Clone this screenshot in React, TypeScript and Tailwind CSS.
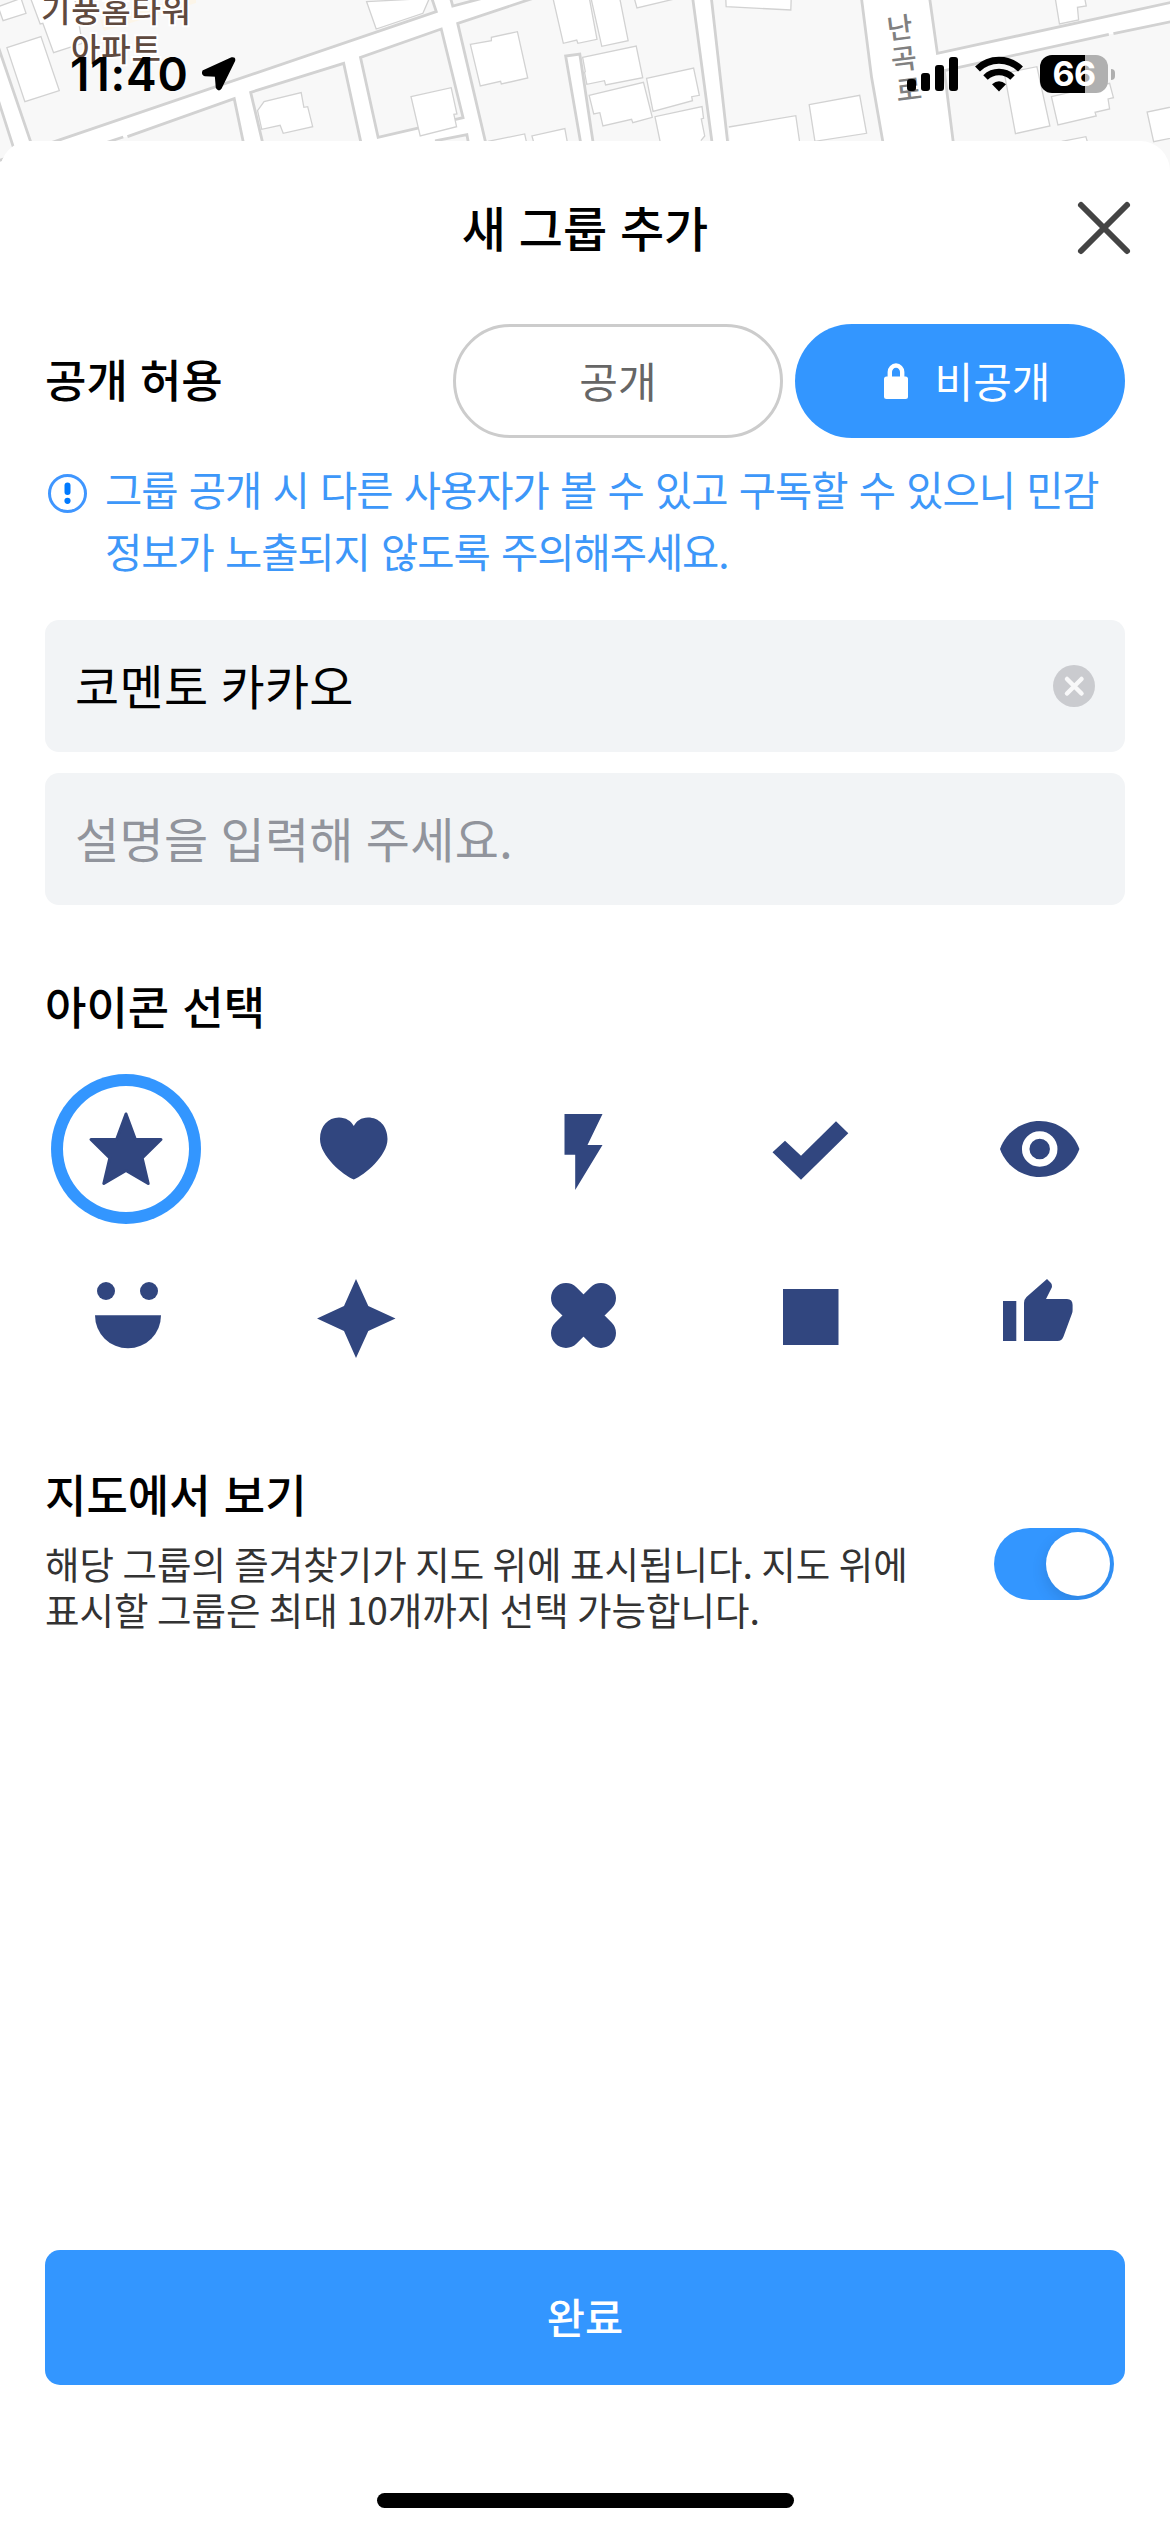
import React, { useState } from 'react';

interface GroupIconData {
  name: string;
  shape: React.ReactNode;
}

interface VisibilityButtonProps {
  text: string;
  active: boolean;
  onClick: () => void;
}

const GROUP_ICONS: GroupIconData[] = [
  {
    name: 'star',
    shape: (
      <path
        d="M75 40 L84.4 65.5 H110 L91.2 84 L97.2 109.5 L75 96.5 L52.8 109.5 L58.8 84 L40 65.5 H65.6 Z"
        stroke="currentColor"
        strokeWidth="3"
        strokeLinejoin="round"
      />
    ),
  },
  {
    name: 'heart',
    shape: <path d="M73.8 105.5 C63 101 40 82 40 65 C40 52 48 43.5 59 43.5 C66 43.5 71 47 73.8 52 C76.6 47 81 43.5 88 43.5 C99 43.5 107.5 52 107.5 65 C107.5 82 84.5 101 73.8 105.5 Z" />,
  },
  { name: 'bolt', shape: <path d="M56.5 40 H94.5 L79.5 71 H94.5 L67.2 116 V80.8 H56.5 Z" /> },
  { name: 'check', shape: <path d="M35.5 78.3 L48 66.7 L64 81.7 L99 47.3 L111.3 59.3 L64 105.7 Z" /> },
  {
    name: 'eye',
    shape: (
      <>
        <path d="M35 75 C41 58 57 47 74.7 47 C92.4 47 108.4 58 114.4 75 C108.4 92 92.4 103 74.7 103 C57 103 41 92 35 75 Z" />
        <circle cx="74.7" cy="75" r="14" fill="none" stroke="white" strokeWidth="7.5" />
      </>
    ),
  },
  {
    name: 'smile',
    shape: (
      <>
        <circle cx="55" cy="49" r="9" />
        <circle cx="98" cy="49" r="9" />
        <path d="M44 73.3 H110 A33 33 0 0 1 44 73.3 Z" />
      </>
    ),
  },
  { name: 'sparkle', shape: <path d="M76 37 L88.3 64 L115.5 76.5 L88.3 89 L76 116 L64 89 L37 76.5 L64 64 Z" /> },
  {
    name: 'clover',
    shape: <path d="M58 56 L93 91 M93 56 L58 91" fill="none" stroke="currentColor" strokeWidth="30" strokeLinecap="round" />,
  },
  { name: 'square', shape: <rect x="46" y="47" width="55.5" height="56" /> },
  {
    name: 'thumb',
    shape: (
      <path d="M38 59 H51.3 V99 H38 Z M59 99 V61 Q59 57.5 61.5 55 L82 37 L85.5 40.5 Q87.5 42.5 86.8 45.5 L81 57 H102 Q107.6 57 107.6 63 V68 Q107.6 70 107 71.5 L98.5 94.5 Q96.8 99 92.5 99 Z" />
    ),
  },
];

// Traced on a stretched grid, the groups below scale it back to screen pixels
const LEFT_BLOCKS =
  'M-20 88 V-20 H1124 L1140 35 L150 422 L-100 520 L117 560 L80 425 Z M-20 245 L68 560 H-20 Z M333 410 L612 296 L660 560 H100 V495 L322 411 M685 422 L655 277 L898 190 L942 422 L965 560 H705 Z M988 412 L942 172 L1153 87 L1210 353 Z M1140 422 L1220 404 L1245 560 H1140 Z M1174 -20 L1183 18 L1310 -20 Z M1296 560 L1196 70 L1440 -23 H1808 L1876 560 Z';
const LEFT_BUILDINGS =
  'M-5 20 L8 62 L68 40 L55 -5 Z M18 143 L107 110 L155 272 L65 305 Z M80 -5 L105 72 L112 70 L140 158 L215 130 L195 -5 Z M958 5 L983 87 L1105 40 L1122 -5 Z M1229 133 L1284 122 V112 L1352 95 L1379 234 L1310 252 L1308 244 L1255 258 Z M673 332 L690 305 L787 278 L794 322 L804 320 L817 380 L740 400 L732 376 L684 388 Z M1074 290 L1179 263 L1194 342 L1186 343 L1193 380 L1098 408 Z M1275 424 L1371 402 L1380 450 M1400 450 L1390 408 L1476 386 L1486 450 M1445 -5 L1472 130 L1507 120 L1510 130 L1560 118 L1540 -5 Z';
const RIGHT_BLOCKS =
  'M368 -20 L425 560 H838 L788 232 L760 -20 Z M938 -20 L960 160 L1600 0 V-20 Z M1408 103 L978 212 L1016 560 H1600 V58 L1420 101';
const RIGHT_BUILDINGS =
  'M55 -5 L83 139 L152 122 L130 -5 Z M168 -5 L175 24 L280 -5 Z M407 -5 L408 20 L577 30 L578 -5 Z M33 172 L173 138 L190 233 L93 255 L90 242 L44 253 L38 217 L40 215 Z M200 235 L323 204 L338 286 L318 290 L320 302 L217 334 Z M50 286 L192 247 L215 352 L164 368 L161 358 L86 378 L78 338 L62 342 Z M240 450 L222 350 L345 320 L349 355 L343 357 L352 408 L342 422 M415 381 L590 347 L603 450 H420 M625 314 L757 286 L775 400 L640 424 Z M1268 -5 L1279 72 L1329 60 L1326 22 L1349 18 L1345 -5 Z M1135 220 L1220 200 L1254 378 L1164 401 Z M1258 290 L1410 250 L1420 293 L1406 297 L1410 327 L1372 337 L1375 348 L1275 375 Z M1600 314 L1508 336 L1525 425 L1600 408 M1285 424 L1348 410 L1358 450';

const MapBackdrop: React.FC = () => (
  <svg viewBox="0 0 1170 180" className="absolute inset-0 h-[180px] w-[1170px] bg-white font-['Noto_Sans_CJK_KR',sans-serif]">
    <g transform="scale(0.3827 0.3333)" stroke="#d2d2d2">
      <path d={LEFT_BLOCKS} fill="#f8f8f8" strokeWidth="2.8" vectorEffect="non-scaling-stroke" />
      <path d={LEFT_BUILDINGS} fill="#ffffff" strokeWidth="1.3" vectorEffect="non-scaling-stroke" />
      <path d="M1522 460 L1478 168 L1515 162 L1554 460" fill="#ffffff" strokeWidth="2.8" vectorEffect="non-scaling-stroke" />
    </g>
    <g transform="translate(570 0) scale(0.3827 0.3333)" stroke="#d2d2d2">
      <path d={RIGHT_BLOCKS} fill="#f8f8f8" strokeWidth="2.8" vectorEffect="non-scaling-stroke" />
      <path d={RIGHT_BUILDINGS} fill="#ffffff" strokeWidth="1.3" vectorEffect="non-scaling-stroke" />
    </g>
    <path d="M100 20 L104 31 L196 3 V-5 Z" fill="#fcf5e8" />
    <g fill="#5f4a3f" stroke="#ffffff" strokeWidth="4" paintOrder="stroke" fontSize="32" fontWeight="500" textAnchor="middle">
      <text x="116" y="22" textLength="150">기풍홈타워</text>
      <text x="116" y="61" textLength="90">아파트</text>
    </g>
    <g fill="#808080" stroke="#ffffff" strokeWidth="3" paintOrder="stroke" fontSize="28" fontWeight="500" textAnchor="middle">
      <text transform="translate(901 38) rotate(-7)">난</text>
      <text transform="translate(905 69) rotate(-7)">곡</text>
      <text transform="translate(910 100) rotate(-7)">로</text>
    </g>
  </svg>
);

const StatusBar: React.FC = () => (
  <div className="relative flex h-[148px] items-center justify-between pr-[55px] pl-[70px] font-['Inter',sans-serif]">
    <div className="flex items-center gap-[11px]">
      <span className="text-[46px] leading-[50px] font-semibold tracking-[0.8px] text-black">11:40</span>
      <svg viewBox="0 0 36 36" className="size-[36px]">
        <path d="M32 2.5 L3.5 15.5 Q2.5 18.5 5 19 L16 19.5 L17 31.5 Q18.5 34.5 20.5 32 L34 4.5 Q34.5 2 32 2.5 Z" stroke="black" strokeWidth="2.5" strokeLinejoin="round" />
      </svg>
    </div>
    <div className="flex items-center">
      <svg viewBox="0 0 51 34" className="h-[34px] w-[51px]">
        <rect x="0" y="22" width="9" height="12" rx="3" />
        <rect x="14" y="16" width="9" height="18" rx="3" />
        <rect x="28" y="8" width="9" height="26" rx="3" />
        <rect x="42" y="0" width="9" height="34" rx="3" />
      </svg>
      <svg viewBox="0 0 50 36" className="ml-[16px] h-[36px] w-[50px]">
        <path d="M3.5 13 A31 31 0 0 1 46.5 13" fill="none" stroke="black" strokeWidth="7" />
        <path d="M11.5 21.5 A19.5 19.5 0 0 1 38.5 21.5" fill="none" stroke="black" strokeWidth="6.5" />
        <path d="M25 35.5 L18 28.2 Q25 22.5 32 28.2 Z" />
      </svg>
      <div className="ml-[16px] flex h-[38px] w-[68px] items-center justify-center rounded-[12px] bg-[linear-gradient(to_right,black_66%,#b0b0b0_66%)]">
        <span className="text-[34px] leading-[38px] font-bold tracking-[-0.5px] text-white">66</span>
      </div>
      <div className="ml-[3px] h-[11px] w-[4px] rounded-r-full bg-[#b0b0b0]" />
    </div>
  </div>
);

const VisibilityButton: React.FC<VisibilityButtonProps> = ({ text, active, onClick }) => (
  <button
    onClick={onClick}
    className={
      active
        ? 'flex h-[114px] w-[330px] items-center justify-center gap-[27px] rounded-full bg-[#3396ff] pl-[14px] text-[42px] text-white'
        : 'flex h-[114px] w-[330px] items-center justify-center rounded-full border-3 border-[#cccccc] bg-white text-[42px] text-[#666666]'
    }
  >
    {active && (
      <svg viewBox="0 0 24 36" className="h-[36px] w-[24px]">
        <path d="M5.8 16 V9 A6.2 6.5 0 0 1 18.2 9 V16" fill="none" stroke="white" strokeWidth="4.4" />
        <rect x="0" y="13.5" width="24" height="22.5" rx="2.5" fill="white" />
      </svg>
    )}
    <span className="pb-[4px]">{text}</span>
  </button>
);

const App: React.FC = () => {
  const [isPublic, setIsPublic] = useState(false);
  const [name, setName] = useState('코멘토 카카오');
  const [description, setDescription] = useState('');
  const [selectedIcon, setSelectedIcon] = useState('star');
  const [showOnMap, setShowOnMap] = useState(true);

  return (
    <div className="relative flex h-[2532px] w-[1170px] flex-col overflow-hidden bg-white font-['Noto_Sans_CJK_KR',sans-serif] text-black">
      <MapBackdrop />
      <StatusBar />
      <main className="relative -mt-[7px] flex flex-1 flex-col rounded-t-[30px] bg-white px-[45px]">
        <header className="grid h-[174px] grid-cols-[1fr_auto_1fr] items-center">
          <h1 className="col-start-2 pb-[4px] text-[48px] leading-[60px] font-medium [word-spacing:2px]">새 그룹 추가</h1>
          <button aria-label="닫기" className="-mr-[8px] justify-self-end">
            <svg viewBox="0 0 58 58" className="size-[58px]">
              <path d="M6 6 L52 52 M52 6 L6 52" stroke="#444444" strokeWidth="6" strokeLinecap="round" />
            </svg>
          </button>
        </header>

        <section className="mt-[9px] flex items-center justify-between">
          <h2 className="pb-[4px] text-[45px] leading-[60px] font-medium [word-spacing:2px]">공개 허용</h2>
          <div className="flex gap-[12px]">
            <VisibilityButton text="공개" active={isPublic} onClick={() => setIsPublic(true)} />
            <VisibilityButton text="비공개" active={!isPublic} onClick={() => setIsPublic(false)} />
          </div>
        </section>

        <div className="mt-[20px] flex gap-[17px] pl-[2px]">
          <svg viewBox="0 0 41 41" className="mt-[15px] size-[41px] shrink-0">
            <circle cx="20.5" cy="20.5" r="18" fill="none" stroke="#3f96ff" strokeWidth="3" />
            <rect x="17.5" y="9.5" width="6" height="12.5" rx="3" fill="#007aff" />
            <circle cx="20.5" cy="27.8" r="3.1" fill="#007aff" />
          </svg>
          <p className="text-[40.5px] leading-[62px] tracking-[-1.05px] whitespace-nowrap text-[#3d97f9] [word-spacing:3.3px]">
            그룹 공개 시 다른 사용자가 볼 수 있고 구독할 수 있으니 민감
            <br />
            정보가 노출되지 않도록 주의해주세요.
          </p>
        </div>

        <div className="mt-[38px] flex flex-col gap-[21px]">
          <div className="flex h-[132px] items-center rounded-[14px] bg-[#f2f4f6] pr-[30px] pl-[30px]">
            <input
              value={name}
              onChange={(e) => setName(e.target.value)}
              className="h-[80px] flex-1 pb-[4px] text-[48px] tracking-[0.3px] outline-none [word-spacing:1px]"
            />
            <button aria-label="지우기" onClick={() => setName('')}>
              <svg viewBox="0 0 42 42" className="size-[42px]">
                <circle cx="21" cy="21" r="21" fill="#cacbcf" />
                <path d="M14 14 L28.5 28.5 M28.5 14 L14 28.5" stroke="#f8f8f9" strokeWidth="4.5" strokeLinecap="round" />
              </svg>
            </button>
          </div>
          <div className="flex h-[132px] items-center rounded-[14px] bg-[#f2f4f6] px-[30px]">
            <input
              value={description}
              onChange={(e) => setDescription(e.target.value)}
              placeholder="설명을 입력해 주세요."
              className="h-[80px] flex-1 pb-[4px] text-[48px] tracking-[0.3px] outline-none [word-spacing:1px] placeholder:text-[#91949c]"
            />
          </div>
        </div>

        <section>
          <h2 className="mt-[71px] text-[45px] leading-[60px] font-medium [word-spacing:3px]">아이콘 선택</h2>
          <div className="mt-[38px] grid grid-cols-[repeat(5,150px)] justify-between gap-y-[18px] pr-[10px] pl-[6px] text-[#31467f]">
            {GROUP_ICONS.map((icon) => (
              <button
                key={icon.name}
                aria-label={icon.name}
                onClick={() => setSelectedIcon(icon.name)}
                className={
                  selectedIcon === icon.name
                    ? 'size-[150px] rounded-full shadow-[inset_0_0_0_12px_#3396ff]'
                    : 'size-[150px] rounded-full'
                }
              >
                <svg viewBox="0 0 150 150" className="size-[150px]" fill="currentColor">
                  {icon.shape}
                </svg>
              </button>
            ))}
          </div>
        </section>

        <section className="mt-[72px] flex items-end justify-between pr-[11px]">
          <div>
            <h2 className="text-[45px] leading-[60px] font-medium [word-spacing:3px]">지도에서 보기</h2>
            <p className="mt-[16px] text-[37.5px] leading-[46px] whitespace-nowrap text-[#333333]">
              해당 그룹의 즐겨찾기가 지도 위에 표시됩니다. 지도 위에
              <br />
              표시할 그룹은 최대 10개까지 선택 가능합니다.
            </p>
          </div>
          <button
            role="switch"
            aria-checked={showOnMap}
            aria-label="지도에서 보기"
            onClick={() => setShowOnMap(!showOnMap)}
            className={
              showOnMap
                ? 'mb-[32px] flex h-[72px] w-[120px] items-center justify-end overflow-hidden rounded-full bg-[#3396ff] px-[4px]'
                : 'mb-[32px] flex h-[72px] w-[120px] items-center justify-start overflow-hidden rounded-full bg-gray-300 px-[4px]'
            }
          >
            <span className="size-[64px] rounded-full bg-white shadow-[0_6px_16px_rgba(0,0,0,0.12)]" />
          </button>
        </section>

        <button className="mt-auto h-[135px] rounded-[15px] bg-[#3396ff] pb-[3px] text-[41.5px] font-medium text-white">완료</button>
        <div className="mt-[108px] mb-[24px] h-[15px] w-[417px] self-center rounded-full bg-black" />
      </main>
    </div>
  );
};

export default App;
